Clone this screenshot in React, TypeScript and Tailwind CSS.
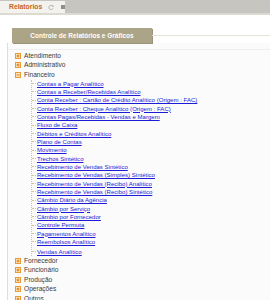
import React from "react";

const font = { fontFamily: '"Liberation Sans", Arial, sans-serif' };

const links = [
  "Contas a Pagar Analítico",
  "Contas a Receber/Recebidas Analítico",
  "Conta Receber : Cartão de Crédito Analítico (Origem : FAC)",
  "Conta Receber : Cheque Analítico (Origem : FAC)",
  "Contas Pagas/Recebidas - Vendas e Margem",
  "Fluxo de Caixa",
  "Débitos e Créditos Analítico",
  "Plano de Contas",
  "Movimento",
  "Trechos Sintético",
  "Recebimento de Vendas Sintético",
  "Recebimento de Vendas (Simples) Sintético",
  "Recebimento de Vendas (Recibo) Analítico",
  "Recebimento de Vendas (Recibo) Sintético",
  "Câmbio Diário da Agência",
  "Câmbio por Serviço",
  "Câmbio por Fornecedor",
  "Controle Permuta",
  "Pagamentos Analítico",
  "Reembolsos Analítico",
];

function Toggle({ open }: { open?: boolean }) {
  return (
    <svg width="6" height="6" viewBox="0 0 6 6" className="shrink-0">
      <rect x="0.5" y="0.5" width="5" height="5" fill="#fbe9b8" stroke="#e89a3a" />
      <line x1="1.5" y1="3" x2="4.5" y2="3" stroke="#d9761f" />
      {!open && <line x1="3" y1="1.5" x2="3" y2="4.5" stroke="#d9761f" />}
    </svg>
  );
}

function Node({ label, open }: { label: string; open?: boolean }) {
  return (
    <div className="flex h-[9.5px] items-center gap-[3px] pl-[7px] text-[6.6px] text-[#3a3a3a]">
      <Toggle open={open} />
      <span>{label}</span>
    </div>
  );
}

function Leaf({ label, last }: { label: string; last?: boolean }) {
  return (
    <div className={`flex items-center ${last ? "h-[10px] pt-[1px]" : "h-[8.33px]"}`}>
      <span className="mr-[1px] h-0 w-[4px] border-t border-dotted border-[#d8c48e]" />
      <a href="#" className="text-[6.05px] leading-none text-[#1b1bd8] underline">
        {label}
      </a>
    </div>
  );
}

export default function App() {
  return (
    <div className="h-[300px] w-[270px] overflow-hidden bg-white" style={font}>
      <div className="flex h-[15px] items-end border-b-2 border-[#dddbd1] bg-[#c6c5bf]">
        <div className="flex h-[12px] w-[65px] items-center gap-[5px] bg-[#f3f2ee] pl-[9px]">
          <span className="text-[6.8px] font-bold text-[#c8661c]">Relatorios</span>
          <svg width="7" height="7" viewBox="0 0 8 8" className="ml-[1px]">
            <path d="M6.5 3.2A2.7 2.7 0 1 0 6.4 5" fill="none" stroke="#a9a9a9" strokeWidth="1.2" />
            <path d="M5.2 1.6L7 3.4 7.3 1.2z" fill="#a9a9a9" />
          </svg>
          <span className="ml-[2px] h-[4px] w-[4px] bg-[#8e8e8e]" />
        </div>
      </div>

      <div className="mt-[13px] flex items-center pl-[12px]">
        <div className="flex h-[15px] w-[140px] items-center justify-center bg-[#aca486] text-[6.5px] font-bold text-white shadow-[1px_1px_0_#9a927a]">
          Controle de Relatórios e Gráficos
        </div>
        <div className="h-0 flex-1 border-t border-[#e7e3d5]" />
      </div>

      <div className="ml-[7px] h-[300px] border-l border-[#dedede] bg-[#fbfbfb] pt-[6px]">
        <div className="border-t border-[#eeeeee] pt-[1px]">
          <Node label="Atendimento" />
          <Node label="Administrativo" />
          <Node label="Financeiro" open />
          <div className="ml-[23px] border-l border-dotted border-[#d8c48e]">
            {links.map((l) => (
              <Leaf key={l} label={l} />
            ))}
            <Leaf label="Vendas Analítico" last />
          </div>
          <Node label="Fornecedor" />
          <Node label="Funcionário" />
          <Node label="Produção" />
          <Node label="Operações" />
          <Node label="Outros" />
        </div>
      </div>
    </div>
  );
}
